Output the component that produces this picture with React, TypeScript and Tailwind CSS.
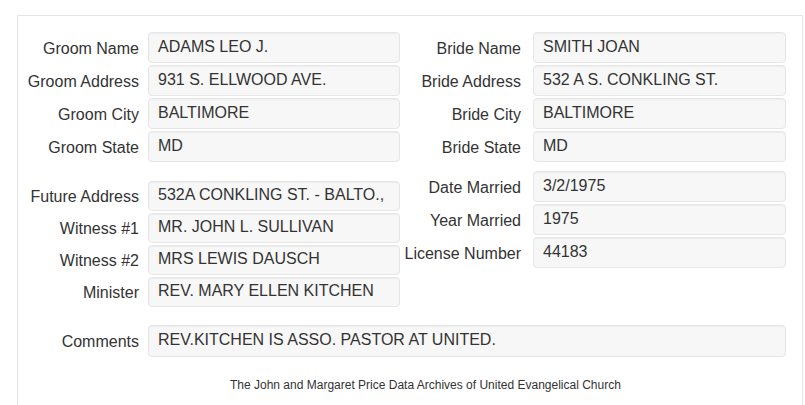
import React from 'react';

type Field = { label: string; value: string };

const groom: Field[] = [
    { label: 'Groom Name', value: 'ADAMS LEO J.' },
    { label: 'Groom Address', value: '931 S. ELLWOOD AVE.' },
    { label: 'Groom City', value: 'BALTIMORE' },
    { label: 'Groom State', value: 'MD' },
];

const bride: Field[] = [
    { label: 'Bride Name', value: 'SMITH JOAN' },
    { label: 'Bride Address', value: '532 A S. CONKLING ST.' },
    { label: 'Bride City', value: 'BALTIMORE' },
    { label: 'Bride State', value: 'MD' },
];

const others: Field[] = [
    { label: 'Future Address', value: '532A CONKLING ST. - BALTO.,' },
    { label: 'Witness #1', value: 'MR. JOHN L. SULLIVAN' },
    { label: 'Witness #2', value: 'MRS LEWIS DAUSCH' },
    { label: 'Minister', value: 'REV. MARY ELLEN KITCHEN' },
];

const marriage: Field[] = [
    { label: 'Date Married', value: '3/2/1975' },
    { label: 'Year Married', value: '1975' },
    { label: 'License Number', value: '44183' },
];

const Well = ({ value, className }: { value: string; className: string }) => (
    <div
        className={`flex items-center shrink-0 pl-[9px] pb-[2px] bg-[#f7f7f7] border border-[#e6e6e6] rounded-[4px] shadow-[inset_0_1px_1px_rgba(0,0,0,0.04)] whitespace-nowrap overflow-hidden ${className}`}
    >
        {value}
    </div>
);

const Row = ({ f, left, h }: { f: Field; left: boolean; h: string }) => (
    <div className={`flex items-center ${h}`}>
        {left ? (
            <div className="w-[121px] shrink-0 text-right whitespace-nowrap pt-[2px]">{f.label}</div>
        ) : (
            <div className="w-[124px] shrink-0 text-right whitespace-nowrap pt-[2px] pr-[3px]">{f.label}</div>
        )}
        {left ? (
            <Well value={f.value} className={`ml-[9px] w-[252px] ${h}`} />
        ) : (
            <Well value={f.value} className={`ml-[9px] w-[253px] ${h}`} />
        )}
    </div>
);

export default function App() {
    return (
        <div className="w-[805px] h-[405px] overflow-hidden bg-white text-[#333333] text-[16px] leading-[20px] font-['Liberation_Sans',Arial,sans-serif]">
            <div className="mt-[15px] ml-[17px] w-[786px] h-[400px] border border-[#e5e5e5] pt-[16px]">
                <div className="flex items-start">
                    {/* groom side */}
                    <div className="flex flex-col w-[382px] shrink-0">
                        <div className="flex flex-col gap-[2px]">
                            {groom.map(f => <Row key={f.label} f={f} left h="h-[31px]" />)}
                        </div>
                        <div className="flex flex-col gap-[2px] mt-[19px]">
                            {others.map(f => <Row key={f.label} f={f} left h="h-[30px]" />)}
                        </div>
                    </div>
                    {/* bride side */}
                    <div className="flex flex-col shrink-0">
                        <div className="flex flex-col gap-[2px]">
                            {bride.map(f => <Row key={f.label} f={f} left={false} h="h-[31px]" />)}
                        </div>
                        <div className="flex flex-col gap-[2px] mt-[9px]">
                            {marriage.map(f => <Row key={f.label} f={f} left={false} h="h-[31px]" />)}
                        </div>
                    </div>
                </div>

                <div className="flex items-center h-[32px] mt-[18px]">
                    <div className="w-[121px] shrink-0 text-right pt-[2px]">Comments</div>
                    <Well value="REV.KITCHEN IS ASSO. PASTOR AT UNITED." className="ml-[9px] w-[638px] h-[32px]" />
                </div>

                <div className="mt-[20px] ml-[212px] text-[12px] leading-[16px] whitespace-nowrap">
                    The John and Margaret Price Data Archives of United Evangelical Church
                </div>
            </div>
        </div>
    );
}
